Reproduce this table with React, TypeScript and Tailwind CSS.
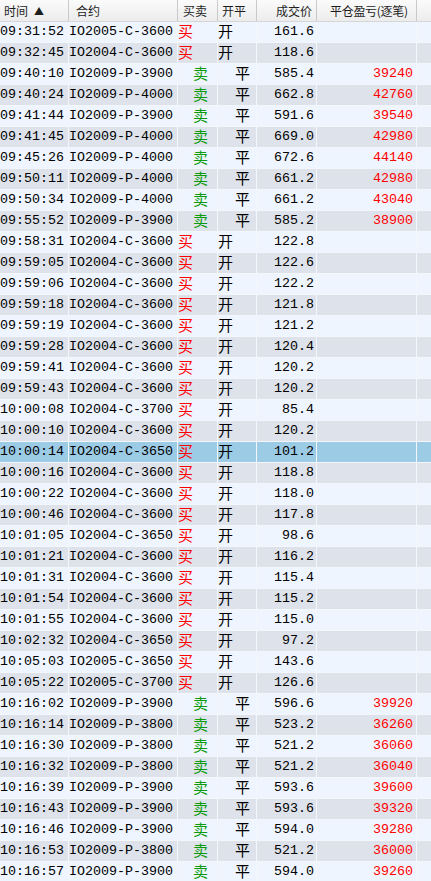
import React from "react";

type Trade = [string, string, "b" | "s", string, string];

const trades: Trade[] = [
  ["09:31:52", "IO2005-C-3600", "b", "161.6", ""],
  ["09:32:45", "IO2004-C-3600", "b", "118.6", ""],
  ["09:40:10", "IO2009-P-3900", "s", "585.4", "39240"],
  ["09:40:24", "IO2009-P-4000", "s", "662.8", "42760"],
  ["09:41:44", "IO2009-P-3900", "s", "591.6", "39540"],
  ["09:41:45", "IO2009-P-4000", "s", "669.0", "42980"],
  ["09:45:26", "IO2009-P-4000", "s", "672.6", "44140"],
  ["09:50:11", "IO2009-P-4000", "s", "661.2", "42980"],
  ["09:50:34", "IO2009-P-4000", "s", "661.2", "43040"],
  ["09:55:52", "IO2009-P-3900", "s", "585.2", "38900"],
  ["09:58:31", "IO2004-C-3600", "b", "122.8", ""],
  ["09:59:05", "IO2004-C-3600", "b", "122.6", ""],
  ["09:59:06", "IO2004-C-3600", "b", "122.2", ""],
  ["09:59:18", "IO2004-C-3600", "b", "121.8", ""],
  ["09:59:19", "IO2004-C-3600", "b", "121.2", ""],
  ["09:59:28", "IO2004-C-3600", "b", "120.4", ""],
  ["09:59:41", "IO2004-C-3600", "b", "120.2", ""],
  ["09:59:43", "IO2004-C-3600", "b", "120.2", ""],
  ["10:00:08", "IO2004-C-3700", "b", "85.4", ""],
  ["10:00:10", "IO2004-C-3600", "b", "120.2", ""],
  ["10:00:14", "IO2004-C-3650", "b", "101.2", ""],
  ["10:00:16", "IO2004-C-3600", "b", "118.8", ""],
  ["10:00:22", "IO2004-C-3600", "b", "118.0", ""],
  ["10:00:46", "IO2004-C-3600", "b", "117.8", ""],
  ["10:01:05", "IO2004-C-3650", "b", "98.6", ""],
  ["10:01:21", "IO2004-C-3600", "b", "116.2", ""],
  ["10:01:31", "IO2004-C-3600", "b", "115.4", ""],
  ["10:01:54", "IO2004-C-3600", "b", "115.2", ""],
  ["10:01:55", "IO2004-C-3600", "b", "115.0", ""],
  ["10:02:32", "IO2004-C-3650", "b", "97.2", ""],
  ["10:05:03", "IO2005-C-3650", "b", "143.6", ""],
  ["10:05:22", "IO2005-C-3700", "b", "126.6", ""],
  ["10:16:02", "IO2009-P-3900", "s", "596.6", "39920"],
  ["10:16:14", "IO2009-P-3800", "s", "523.2", "36260"],
  ["10:16:30", "IO2009-P-3800", "s", "521.2", "36060"],
  ["10:16:32", "IO2009-P-3800", "s", "521.2", "36040"],
  ["10:16:39", "IO2009-P-3900", "s", "593.6", "39600"],
  ["10:16:43", "IO2009-P-3900", "s", "593.6", "39320"],
  ["10:16:46", "IO2009-P-3900", "s", "594.0", "39280"],
  ["10:16:53", "IO2009-P-3800", "s", "521.2", "36000"],
  ["10:16:57", "IO2009-P-3900", "s", "594.0", "39260"],
];

const SELECTED = 20;
const cols = "grid grid-cols-[69px_109px_40px_39px_60px_100px_1fr]";
const mono = "font-['Liberation_Mono','Noto_Sans_CJK_SC',monospace]";
const cjk = "font-['Noto_Sans_CJK_SC',sans-serif] text-[15px] leading-[17px] -translate-y-[2px]";

function Header() {
  const cell = "flex items-center border-r border-[#c9c9c9] h-full";
  return (
    <div
      className={`${cols} h-[22px] bg-gradient-to-b from-[#fbfbfb] to-[#ececec] border-b border-[#d6d6d6] text-[12px] text-[#1e1e1e] font-['Noto_Sans_CJK_SC',sans-serif]`}
    >
      <div className={`${cell} pl-[4px] gap-[6px]`}>
        <span>时间</span>
        <span className="text-[10px]">▲</span>
      </div>
      <div className={`${cell} pl-[7px]`}>合约</div>
      <div className={`${cell} pl-[5px]`}>买卖</div>
      <div className={`${cell} pl-[4px]`}>开平</div>
      <div className={`${cell} justify-end pr-[4px]`}>成交价</div>
      <div className={`${cell} pl-[13px] tracking-[-0.3px]`}>平仓盈亏(逐笔)</div>
      <div className="h-full" />
    </div>
  );
}

function Row({ t, i }: { t: Trade; i: number }) {
  const [time, code, side, price, pnl] = t;
  const bg =
    i === SELECTED ? "bg-[#9ccbe6]" : i % 2 === 0 ? "bg-[#eff5fe]" : "bg-[#dee3eb]";
  const cell = "flex items-center h-full border-r border-[#f3f6fa]";
  const buy = side === "b";
  return (
    <div
      className={`${cols} ${bg} ${mono} h-[21px] border-b border-[#f3f6fa] text-[13.33px] text-black whitespace-nowrap`}
    >
      <div className={cell}>{time}</div>
      <div className={cell}>{code}</div>
      <div className={`${cell} ${buy ? "pl-0 text-[#ff0000]" : "pl-[15px] text-[#0a9a0a]"}`}>
        <span className={cjk}>{buy ? "买" : "卖"}</span>
      </div>
      <div className={`${cell} ${buy ? "pl-0" : "pl-[17px]"}`}>
        <span className={cjk}>{buy ? "开" : "平"}</span>
      </div>
      <div className={`${cell} justify-end pr-[2px]`}>{price}</div>
      <div className={`${cell} justify-end pr-[3px] text-[#ff0000]`}>{pnl}</div>
      <div className="h-full" />
    </div>
  );
}

export default function App() {
  return (
    <div className="w-[431px] h-[881px] overflow-hidden bg-[#eff5fe]">
      <Header />
      {trades.map((t, i) => (
        <Row key={i} t={t} i={i} />
      ))}
    </div>
  );
}
